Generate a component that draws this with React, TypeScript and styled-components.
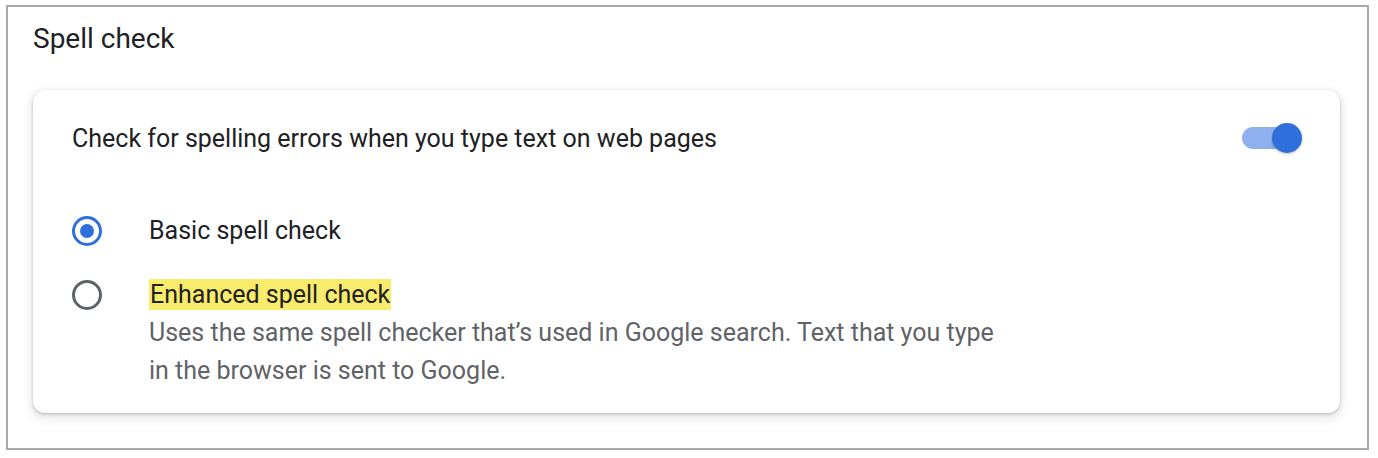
import { createGlobalStyle, styled } from "styled-components"

const GlobalStyle = createGlobalStyle`
    html, body {
        margin: 0;
        padding: 0;
        background: #ffffff;
    }

    body {
        font-family: Roboto, "Liberation Sans", Arial, sans-serif;
        color: #202124;
    }
`

const Frame = styled.div`
    box-sizing: border-box;
    width: 1363px;
    height: 445px;
    margin: 5px 0 0 6px;
    border: 2px solid #a9a9a9;
    padding: 16px 27px 0 25px;
`

const Title = styled.h2`
    margin: 0 0 35px;
    font-size: 28px;
    font-weight: 400;
    line-height: 32px;
    color: #202124;
`

const Card = styled.section`
    box-sizing: border-box;
    height: 323px;
    padding: 0 38px 23px 39px;
    border-radius: 12px;
    background: #ffffff;
    box-shadow: 0 1px 3px rgba(60, 64, 67, 0.3), 0 4px 10px 2px rgba(60, 64, 67, 0.12);
`

const ToggleRow = styled.div`
    display: flex;
    align-items: center;
    justify-content: space-between;
    height: 96px;
    font-size: 25px;
`

const Toggle = styled.div<{ $on: boolean }>`
    position: relative;
    width: 60px;
    height: 30px;

    &::before {
        content: "";
        position: absolute;
        left: 0;
        top: 4px;
        width: 48px;
        height: 22px;
        border-radius: 11px;
        background: ${(p) => (p.$on ? "#8fb0ef" : "#bdc1c6")};
    }
`

const Knob = styled.span<{ $on: boolean }>`
    position: absolute;
    top: 0;
    left: ${(p) => (p.$on ? "30px" : "0")};
    width: 30px;
    height: 30px;
    border-radius: 50%;
    background: ${(p) => (p.$on ? "#2f6fdc" : "#ffffff")};
    box-shadow: 0 1px 3px rgba(0, 0, 0, 0.25);
`

const Options = styled.div`
    display: flex;
    flex-direction: column;
    gap: 26px;
    padding-top: 26px;
`

const Option = styled.label`
    display: grid;
    grid-template-columns: 77px 1fr;
    font-size: 25px;
    line-height: 38px;
`

const Radio = styled.span<{ $checked: boolean }>`
    box-sizing: border-box;
    display: flex;
    align-items: center;
    justify-content: center;
    width: 30px;
    height: 30px;
    margin-top: 4px;
    border-radius: 50%;
    border: 3px solid ${(p) => (p.$checked ? "#2f6fdc" : "#5f6368")};

    &::after {
        content: "";
        display: ${(p) => (p.$checked ? "block" : "none")};
        width: 14px;
        height: 14px;
        border-radius: 50%;
        background: #2f6fdc;
    }
`

const Label = styled.div`
    color: #202124;
`

const Highlight = styled.mark`
    background: #f9ec6c;
    color: inherit;
    padding: 1px 1px;
`

const Description = styled.div`
    max-width: 855px;
    color: #5f6368;
`

export default function App() {
    return (
        <>
            <GlobalStyle />
            <Frame>
                <Title>Spell check</Title>
                <Card>
                    <ToggleRow>
                        <span>Check for spelling errors when you type text on web pages</span>
                        <Toggle $on>
                            <Knob $on />
                        </Toggle>
                    </ToggleRow>
                    <Options>
                        <Option>
                            <Radio $checked />
                            <Label>Basic spell check</Label>
                        </Option>
                        <Option>
                            <Radio $checked={false} />
                            <div>
                                <Label>
                                    <Highlight>Enhanced spell check</Highlight>
                                </Label>
                                <Description>
                                    Uses the same spell checker that’s used in Google search. Text that you type
                                    in the browser is sent to Google.
                                </Description>
                            </div>
                        </Option>
                    </Options>
                </Card>
            </Frame>
        </>
    )
}
